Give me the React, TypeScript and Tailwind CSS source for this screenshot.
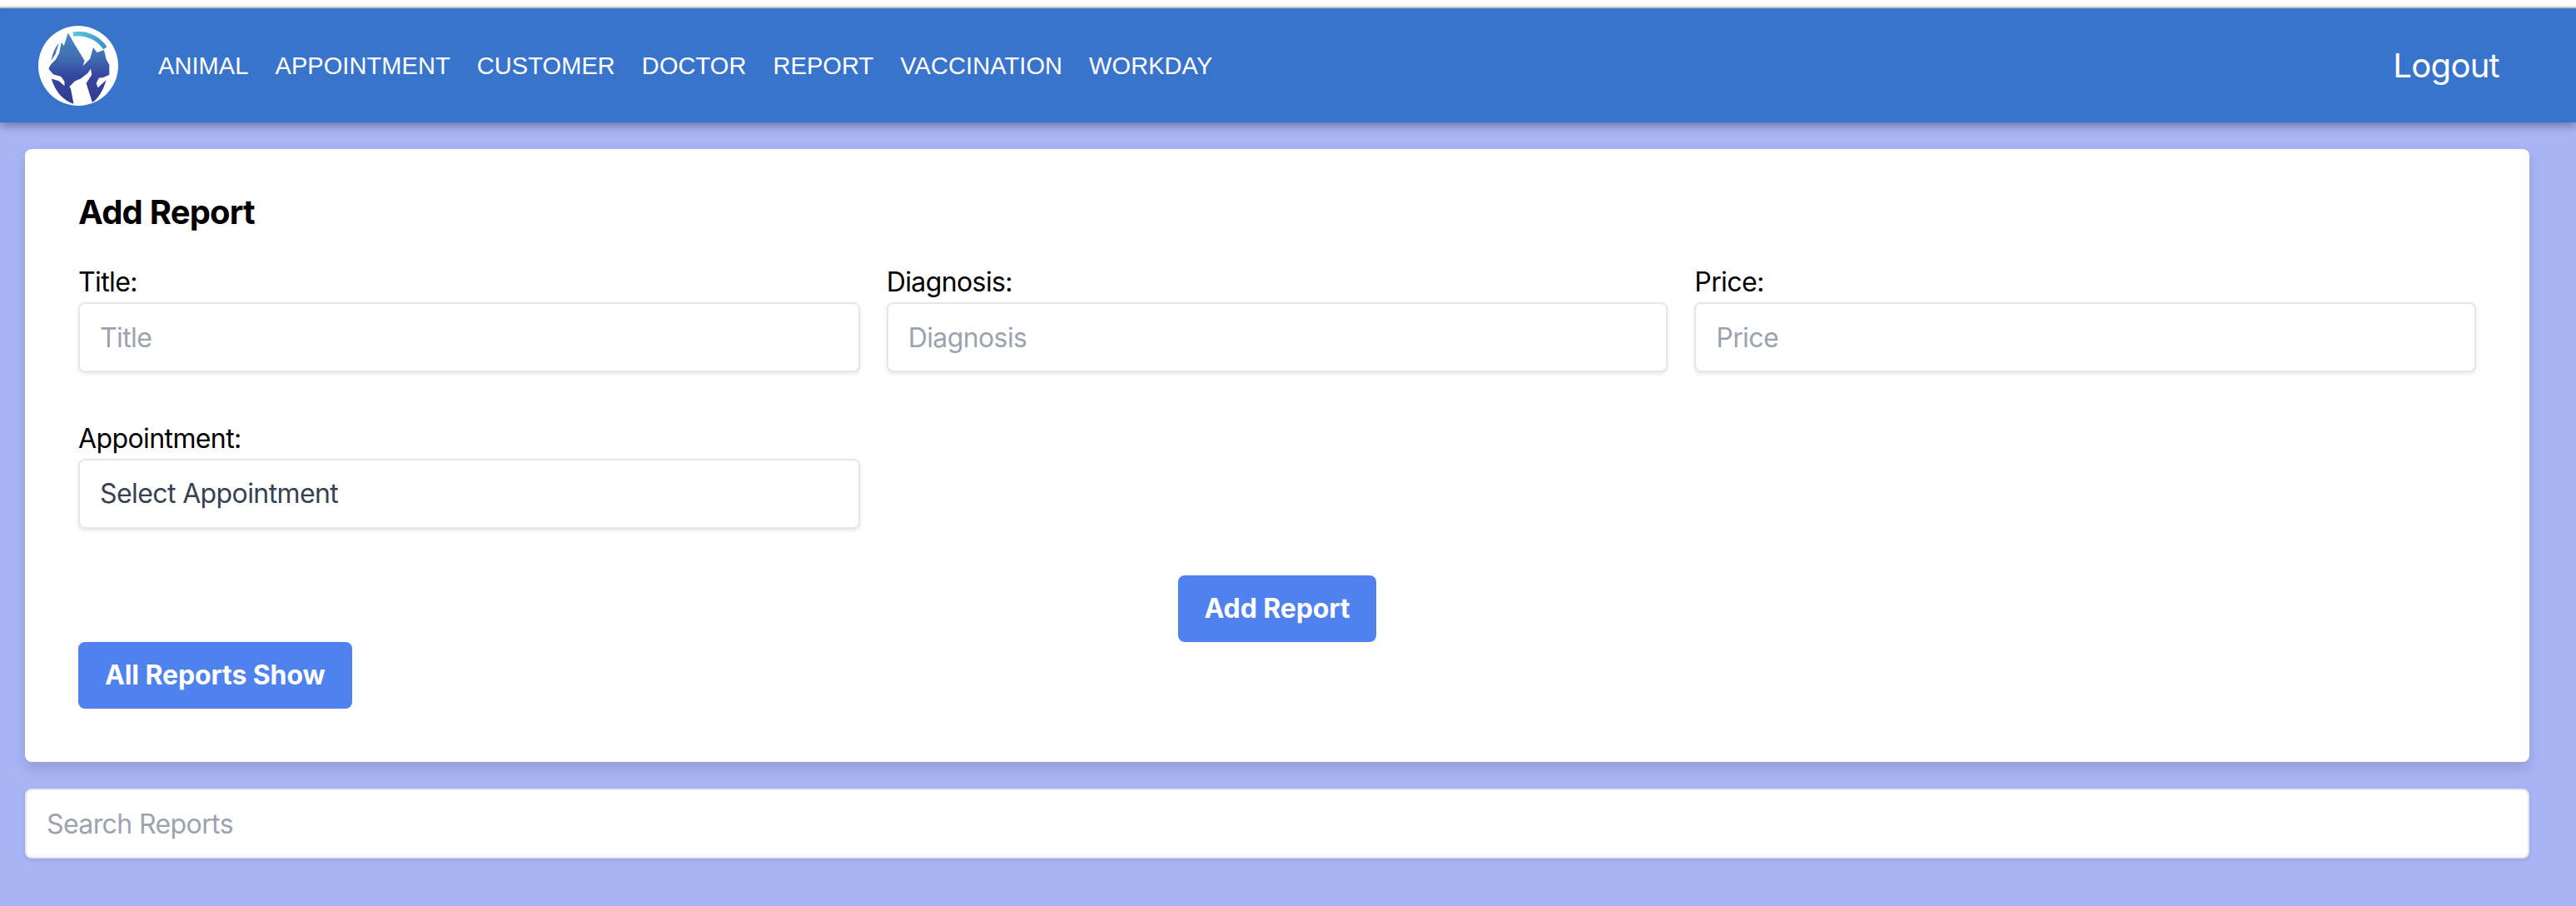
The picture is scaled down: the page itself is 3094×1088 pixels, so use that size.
const navItems = ['ANIMAL', 'APPOINTMENT', 'CUSTOMER', 'DOCTOR', 'REPORT', 'VACCINATION', 'WORKDAY'];

function Logo() {
  return (
    <svg viewBox="18 10 287 287" className="h-[96px] w-[96px] shrink-0">
      <defs>
        <linearGradient id="petFill" x1="0" y1="35" x2="0" y2="290" gradientUnits="userSpaceOnUse">
          <stop offset="0" stopColor="#4a8ac8" />
          <stop offset="0.35" stopColor="#3f6db3" />
          <stop offset="0.6" stopColor="#35479c" />
          <stop offset="1" stopColor="#343a94" />
        </linearGradient>
        <linearGradient id="petArc" x1="145" y1="40" x2="260" y2="95" gradientUnits="userSpaceOnUse">
          <stop offset="0" stopColor="#5cc4e2" />
          <stop offset="1" stopColor="#3f8cc8" />
        </linearGradient>
      </defs>
      <circle cx="161.5" cy="153.5" r="143.5" fill="#fff" />
      <path d="M143 40 A115 115 0 0 1 258 90" fill="none" stroke="url(#petArc)" strokeWidth="16" />
      <path
        d="M125 35 L148 76 L184 135 L178 154 L204 128 L215 88 L229 106 L254 97 L262 130 L273 150 L273 186 L250 196 L236 197 L226 216 L232 232 L262 204 C250 245 232 272 212 285 L190 216 L210 186 L206 164 L196 180 L170 200 L150 208 L130 228 L135 238 L145 290 C108 280 78 245 65 200 L92 208 L112 226 L112 210 L100 192 L72 184 L55 165 L62 150 L80 132 L93 108 L101 70 L110 82 Z"
        fill="url(#petFill)"
      />
      <path d="M92 72 L80 110 L65 135 C69 108 78 88 92 72 Z" fill="url(#petFill)" />
    </svg>
  );
}

function Field({ label, placeholder }: { label: string; placeholder: string }) {
  return (
    <div className="flex flex-col">
      <label className="text-[32px] leading-[48px] tracking-[-0.6px] text-black">{label}</label>
      <input
        type="text"
        placeholder={placeholder}
        className="h-[84px] w-full rounded-lg border-2 border-[#e5e7eb] bg-white px-6 text-[32px] tracking-[-0.6px] text-[#374151] shadow-[0_2px_4px_rgba(0,0,0,0.1)] placeholder:text-[#9ca3af]"
      />
    </div>
  );
}

export default function App() {
  return (
    <div className="min-h-[1088px] bg-[#a8b4f4] font-['Inter',sans-serif]">
      <div className="h-[10px] border-b-2 border-[#cccccc] bg-white" />
      <nav className="relative flex h-[137px] items-center justify-between bg-[#3974cc] pl-[46px] pr-[92px] shadow-[0_4px_10px_rgba(0,0,0,0.35)]">
        <div className="flex items-center">
          <Logo />
          <div className="ml-[48px] flex items-center gap-[32px]">
            {navItems.map((item) => (
              <a key={item} className="font-['Liberation_Sans',sans-serif] text-[29px] leading-[48px] tracking-[0.08px] text-white">
                {item}
              </a>
            ))}
          </div>
        </div>
        <a className="text-[40px] leading-[60px] tracking-[-0.7px] text-white">Logout</a>
      </nav>

      <div className="pl-[30px] pr-[56px] pt-[32px]">
        <div className="rounded-lg bg-white px-[64px] pb-[64px] pt-[48px] shadow-[0_8px_16px_rgba(0,0,0,0.12)]">
          <h2 className="mb-[32px] text-[40px] font-bold leading-[56px] tracking-[-0.8px] text-black">Add Report</h2>
          <div className="grid grid-cols-3 gap-x-[32px] gap-y-[56px]">
            <Field label="Title:" placeholder="Title" />
            <Field label="Diagnosis:" placeholder="Diagnosis" />
            <Field label="Price:" placeholder="Price" />
            <div className="flex flex-col">
              <label className="text-[32px] leading-[48px] tracking-[-0.6px] text-black">Appointment:</label>
              <select className="h-[84px] w-full appearance-none rounded-lg border-2 border-[#e5e7eb] bg-white px-6 text-[32px] tracking-[-0.6px] text-[#374151] shadow-[0_2px_4px_rgba(0,0,0,0.1)]">
                <option>Select Appointment</option>
              </select>
            </div>
          </div>
          <div className="mt-[56px] flex justify-center">
            <button className="h-[80px] rounded-lg bg-[#4f82ee] px-[32px] text-[32px] font-bold leading-[48px] tracking-[-0.1px] text-white">
              Add Report
            </button>
          </div>
          <button className="block h-[80px] rounded-lg bg-[#4f82ee] px-[32px] text-[32px] font-bold leading-[48px] tracking-[-0.1px] text-white">
            All Reports Show
          </button>
        </div>

        <input
          type="text"
          placeholder="Search Reports"
          className="mt-[32px] block h-[84px] w-full rounded-lg border-2 border-[#e5e7eb] bg-white px-6 text-[32px] tracking-[-0.6px] text-[#374151] shadow-[0_2px_4px_rgba(0,0,0,0.1)] placeholder:text-[#9ca3af]"
        />
      </div>
    </div>
  );
}
